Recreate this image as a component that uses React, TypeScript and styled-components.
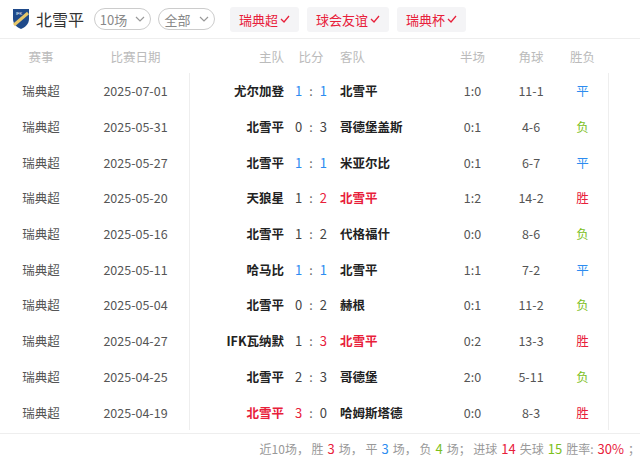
import React from 'react';
import styled, { createGlobalStyle } from 'styled-components';

const GlobalStyle = createGlobalStyle`
  body { margin: 0; font-family: "Noto Sans CJK SC", "Liberation Sans", sans-serif; background: #fff; }
`;

const RED = '#e8203a';
const BLUE = '#2d8cf0';
const GREEN = '#7cc01c';

type Match = { date: string; home: string; hs: number; as: number; away: string; half: string; corner: string; res: string };

const matches: Match[] = [
  { date: '2025-07-01', home: '尤尔加登', hs: 1, as: 1, away: '北雪平', half: '1:0', corner: '11-1', res: '平' },
  { date: '2025-05-31', home: '北雪平', hs: 0, as: 3, away: '哥德堡盖斯', half: '0:1', corner: '4-6', res: '负' },
  { date: '2025-05-27', home: '北雪平', hs: 1, as: 1, away: '米亚尔比', half: '0:1', corner: '6-7', res: '平' },
  { date: '2025-05-20', home: '天狼星', hs: 1, as: 2, away: '北雪平', half: '1:2', corner: '14-2', res: '胜' },
  { date: '2025-05-16', home: '北雪平', hs: 1, as: 2, away: '代格福什', half: '0:0', corner: '8-6', res: '负' },
  { date: '2025-05-11', home: '哈马比', hs: 1, as: 1, away: '北雪平', half: '1:1', corner: '7-2', res: '平' },
  { date: '2025-05-04', home: '北雪平', hs: 0, as: 2, away: '赫根', half: '0:1', corner: '11-2', res: '负' },
  { date: '2025-04-27', home: 'IFK瓦纳默', hs: 1, as: 3, away: '北雪平', half: '0:2', corner: '13-3', res: '胜' },
  { date: '2025-04-25', home: '北雪平', hs: 2, as: 3, away: '哥德堡', half: '2:0', corner: '5-11', res: '负' },
  { date: '2025-04-19', home: '北雪平', hs: 3, as: 0, away: '哈姆斯塔德', half: '0:0', corner: '8-3', res: '胜' },
];

const resColor = (r: string) => (r === '胜' ? RED : r === '平' ? BLUE : GREEN);

const Page = styled.div`
  width: 640px;
  height: 461px;
  overflow: hidden;
`;

const TopBar = styled.div`
  display: flex;
  align-items: center;
  height: 38px;
  padding-left: 12px;
  border-bottom: 1px solid #eee;
`;

const TeamName = styled.span`
  font-size: 16px;
  color: #333;
  margin: 0 10px 0 6px;
`;

const Select = styled.div`
  display: flex;
  align-items: center;
  justify-content: center;
  gap: 8px;
  width: 55px;
  height: 20px;
  border: 1px solid #ccc;
  border-radius: 11px;
  font-size: 13px;
  color: #888;
  margin-right: 7px;
`;

const Tag = styled.div`
  display: flex;
  align-items: center;
  height: 25px;
  padding: 0 9px;
  margin-left: 8px;
  background: #f4f4f6;
  border-radius: 3px;
  color: ${RED};
  font-size: 13px;
`;

const Grid = styled.div<{ $head?: boolean }>`
  display: grid;
  grid-template-columns: 82px 107px 101px 42px 108px 65px 52px 51px 32px;
  align-items: center;
  height: ${p => (p.$head ? '34px' : '35.7px')};
  font-size: 12.5px;
  color: ${p => (p.$head ? '#bbb' : '#555')};
`;

const Cell = styled.div<{ $align?: string; $bold?: boolean; $color?: string; $line?: boolean }>`
  font-weight: ${p => (p.$bold ? 700 : 400)};
  color: ${p => p.$color || 'inherit'};
  height: 100%;
  display: flex;
  align-items: center;
  justify-content: ${p => (p.$align === 'right' ? 'flex-end' : p.$align === 'left' ? 'flex-start' : 'center')};
  border-left: ${p => (p.$line ? '1px solid #eee' : 'none')};
`;

const Home = styled(Cell)`
  padding-right: 6px;
`;

const Away = styled(Cell)`
  padding-left: 8px;
`;

const Score = styled.span<{ $c: string }>`
  color: ${p => p.$c};
  font-size: 13px;
`;

const Colon = styled.span`
  color: #666;
  margin: 0 7px;
`;

const Footer = styled.div`
  border-top: 1px solid #eee;
  height: 30px;
  display: flex;
  align-items: center;
  justify-content: flex-end;
  font-size: 12px;
  color: #999;
  white-space: nowrap;
  margin-top: 3px;
`;

const Num = styled.span<{ $c: string }>`
  color: ${p => p.$c};
  font-size: 13px;
  margin: 0 4px;
`;

const Chevron = () => (
  <svg width="10" height="6" viewBox="0 0 10 6"><path d="M1 1l4 4 4-4" stroke="#999" fill="none" strokeWidth="1.2" /></svg>
);
const Check = () => (
  <svg width="10" height="8" viewBox="0 0 10 8" style={{ marginLeft: 2 }}><path d="M1 4l3 3 5-6" stroke={RED} fill="none" strokeWidth="1.3" /></svg>
);

const Logo = () => (
  <svg width="18" height="22" viewBox="0 0 18 22">
    <path d="M1 1h16v10c0 5-4 8.5-8 10-4-1.5-8-5-8-10z" fill="#1f4a8a" />
    <path d="M2 17L16 5" stroke="#e7c76a" strokeWidth="3" />
    <text x="4" y="7" fontSize="4" fill="#fff" fontFamily="Liberation Sans">IFK</text>
  </svg>
);

const teamColor = (m: Match, side: 'home' | 'away') => {
  const isUs = (side === 'home' ? m.home : m.away) === '北雪平';
  return isUs && m.res === '胜' ? RED : '#222';
};

const scoreColor = (m: Match, side: 'home' | 'away') => {
  if (m.res === '平') return BLUE;
  const us = m.home === '北雪平' ? 'home' : 'away';
  return m.res === '胜' && side === us ? RED : '#444';
};

export default function App() {
  return (
    <Page>
      <GlobalStyle />
      <TopBar>
        <Logo />
        <TeamName>北雪平</TeamName>
        <Select>10场 <Chevron /></Select>
        <Select>全部 <Chevron /></Select>
        <Tag>瑞典超<Check /></Tag>
        <Tag>球会友谊<Check /></Tag>
        <Tag>瑞典杯<Check /></Tag>
      </TopBar>
      <Grid $head>
        <Cell>赛事</Cell>
        <Cell>比赛日期</Cell>
        <Home $align="right">主队</Home>
        <Cell>比分</Cell>
        <Away $align="left">客队</Away>
        <Cell>半场</Cell>
        <Cell>角球</Cell>
        <Cell>胜负</Cell>
        <Cell />
      </Grid>
      {matches.map((m, i) => (
        <Grid key={i}>
          <Cell>瑞典超</Cell>
          <Cell>{m.date}</Cell>
          <Home $align="right" $bold $line $color={teamColor(m, 'home')}>{m.home}</Home>
          <Cell>
            <Score $c={scoreColor(m, 'home')}>{m.hs}</Score>
            <Colon>:</Colon>
            <Score $c={scoreColor(m, 'away')}>{m.as}</Score>
          </Cell>
          <Away $align="left" $bold $color={teamColor(m, 'away')}>{m.away}</Away>
          <Cell>{m.half}</Cell>
          <Cell>{m.corner}</Cell>
          <Cell $color={resColor(m.res)}>{m.res}</Cell>
          <Cell $line />
        </Grid>
      ))}
      <Footer>
        近10场，&nbsp;胜<Num $c={RED}>3</Num>场，&nbsp;平<Num $c={BLUE}>3</Num>场，&nbsp;负<Num $c={GREEN}>4</Num>场；&nbsp;进球<Num $c={RED}>14</Num>失球<Num $c={GREEN}>15</Num>胜率:<Num $c={RED}>30%</Num>；
      </Footer>
    </Page>
  );
}
